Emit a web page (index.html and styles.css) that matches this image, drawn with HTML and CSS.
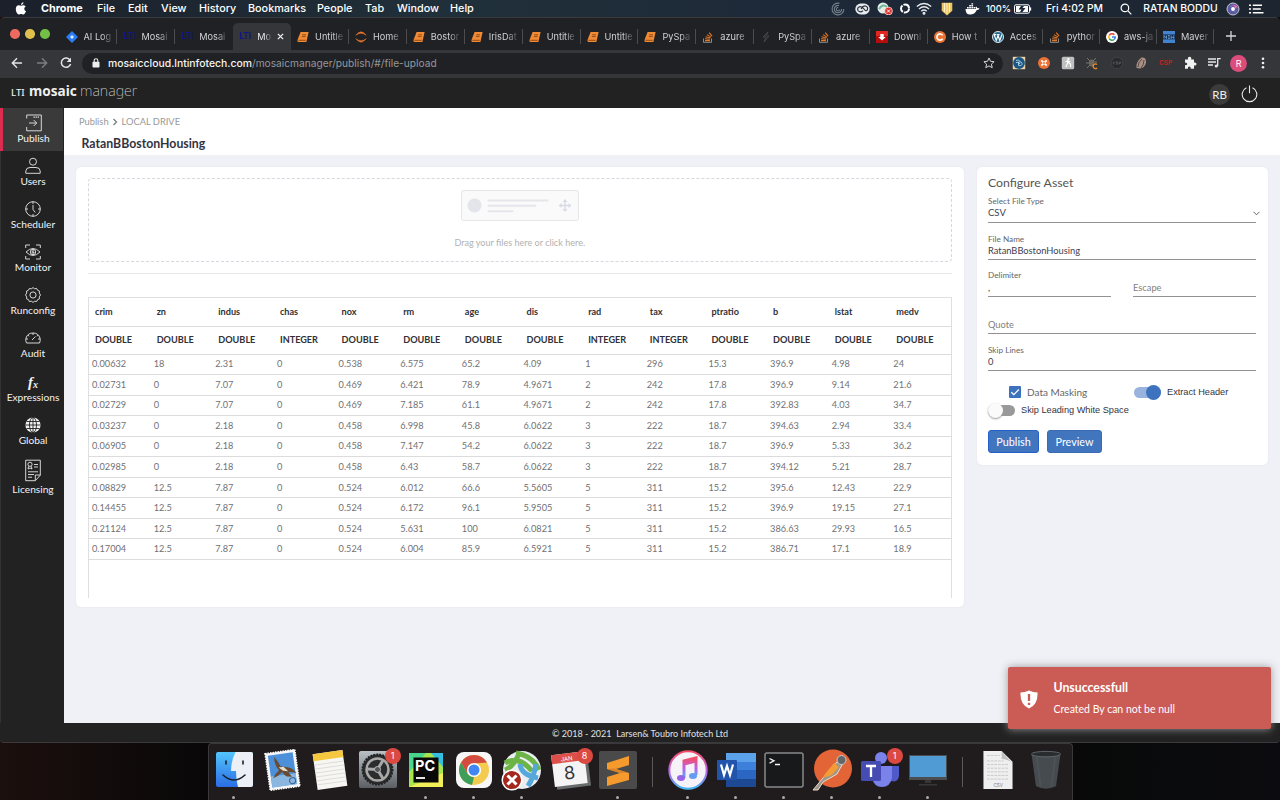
FILE: index.html
```html
<!DOCTYPE html>
<html lang="en">
<head>
<meta charset="utf-8">
<title>LTI mosaic manager</title>
<link rel="stylesheet" href="styles.css">
</head>
<body>
<svg class="defs" aria-hidden="true">
  <symbol id="book" viewBox="0 0 12 12"><path d="M3.600 1h8L9.400 11H1.200Q0 10.500.5 9z" fill="#f08a35"/><path d="M1.400 9.300h7.300M5.200 3.800h3.800M4.800 5.600h3.800" stroke="#7a3d12" stroke-width=".8" fill="none"/></symbol>
  <symbol id="stack" viewBox="0 0 12 12"><path d="M1.500 7.500v3.800h8V7.500" stroke="#8b8e92" fill="none"/><path d="M3 9.600h5M3 7.800l5 .5M3.600 5.700l4.800 1.300M5 3.600l4.100 2.500M7.200 1.600l2.900 3.600" stroke="#e87722" stroke-width="1.100"/></symbol>
</svg>

<header class="menubar">
  <nav class="menus">
    <svg width="12" height="13" viewBox="0 0 12 13"><path d="M8.500.3C7 .6 6 1.600 6.100 3 7.500 2.900 8.500 1.700 8.500.3M6 3.700C5.300 3.700 4.600 3.200 3.700 3.200 2 3.200.8 4.600.8 6.900c0 2.700 1.700 5.500 3.100 5.500.8 0 1.200-.5 2.200-.5s1.300.5 2.200.5c1.200 0 2.200-1.800 2.700-3.200C8.800 8.200 8.900 5.400 10.700 4.500 9.300 2.700 7.500 3.200 6 3.700" fill="#fff"/></svg>
    <b>Chrome</b><span>File</span><span>Edit</span><span>View</span><span>History</span><span>Bookmarks</span><span>People</span><span>Tab</span><span>Window</span><span>Help</span>
  </nav>
  <div class="status">
    <svg width="14" height="14" viewBox="0 0 14 14" fill="none" stroke="#76818c" stroke-width="1.100"><path d="M8.500 1.300A5.900 5.900 0 1 0 12.900 7M8 3.500A3.700 3.700 0 1 0 10.700 7M7.300 5.500A1.700 1.700 0 1 0 8.700 7.500"/></svg>
    <svg width="15" height="12" viewBox="0 0 15 12"><rect x=".3" y=".6" width="14.400" height="10.800" rx="5.400" fill="#e8ebee"/><path d="M8 7.800Q5 10 3 7.500 1.800 5 4.500 3.800 7 3.300 9 6t3.200 1.200Q13.500 4 10.500 3 8 2.600 6 6" fill="none" stroke="#27313d" stroke-width="1.200"/></svg>
    <svg width="16" height="13" viewBox="0 0 16 13"><circle cx="6" cy="6" r="5.500" fill="#e4ece9"/><path d="M2 7Q6 1 10 5" stroke="#6eb795" stroke-width="2" fill="none"/><circle cx="11.500" cy="9" r="3.900" fill="#d9332c" stroke="#fff" stroke-width=".7"/><path d="M10 7.500l3 3M13 7.500l-3 3" stroke="#fff"/></svg>
    <svg width="12" height="13" viewBox="0 0 12 13"><circle cx="6" cy="6.500" r="4" fill="none" stroke="#fff" stroke-width="2" stroke-dasharray="7.300 1.080"/></svg>
    <svg width="16" height="13" viewBox="0 0 16 13" fill="none" stroke="#e5e8eb" stroke-width="1.400"><path d="M.8 4.500Q8-1.500 15.200 4.500M3 7Q8 2.500 13 7M5.300 9.300Q8 6.800 10.700 9.300"/><circle cx="8" cy="11.300" r=".8" fill="#fff"/></svg>
    <svg width="12" height="14" viewBox="0 0 12 14"><path d="M.7.8h10.600v8L6 13.400.7 8.800z" fill="#ecc564"/><path d="M3.500 1v9M6 1v11M8.500 1v9" stroke="#fff2c0"/></svg>
    <svg width="15" height="12" viewBox="0 0 15 12"><path d="M.5 6H11Q10.400 4.500 11 3.500q1.300.7 1.300 1.700 1.200-.3 2.200.3-.8 1.600-2.700 1.500Q9.800 11.500 5 11.500.5 11.500.5 6M2 4h1.700v1.500H2zM4.200 4h1.700v1.500H4.200zM6.400 4h1.700v1.500H6.400zM4.200 2h1.700v1.500H4.200zM6.400 2h1.700v1.500H6.400zM6.400.2h1.700v1.300H6.400zM8.600 4h1.700v1.500H8.600z" fill="#fff"/></svg>
    <span class="percent">100%</span>
    <svg width="18" height="10" viewBox="0 0 18 10"><rect x=".5" y=".8" width="15" height="8.400" rx="1.500" fill="none" stroke="#fff" /><path d="M2 2h5L4.500 5.500h3L6 8H2zM10 2h4v6H8.500l3-4h-3z" fill="#fff"/><path d="M16.500 3.400v3.200" stroke="#fff" stroke-width="1.300"/></svg>
    <span class="clock">Fri 4:02 PM</span>
    <svg width="12" height="12" viewBox="0 0 12 12" fill="none" stroke="#fff" stroke-width="1.200"><circle cx="4.900" cy="4.900" r="3.800"/><path d="M7.700 7.700l3.600 3.600"/></svg>
    <span class="user">RATAN BODDU</span>
    <svg width="14" height="14" viewBox="0 0 14 14"><circle cx="7" cy="7" r="6" fill="#5b5aa0" stroke="#c3c5d0"/><path d="M1.500 7q4-6 5.500 0t5.500 0Q9 12.500 7 7T1.500 7" fill="#7be0ec"/><path d="M4 3.500q6-1 4.500 4.500 2-4 4-2-3-5-8.500-2.500" fill="#e56bb2"/><circle cx="7" cy="7" r="1.900" fill="#fff"/></svg>
    <svg width="15" height="10" viewBox="0 0 15 10"><path d="M0 1.200h2M3.800 1.200h9.200M0 5h2M3.800 5h8M0 8.800h2M3.800 8.800h10.700" stroke="#fff" stroke-width="1.500"/></svg>
  </div>
</header>

<div class="window">
  <div class="tabs">
    <div class="lights"><i></i><i></i><i></i></div>
    <div class="tab"><svg viewBox="0 0 12 12"><path d="M6 0l6 6-6 6-6-6z" fill="#2a7df5"/><path d="M6 4l2 2-2 2-2-2z" fill="#dbe9ff"/></svg><span>AI Log</span></div>
    <div class="tab"><b class="lti">LTI</b><span>Mosai</span></div>
    <div class="tab before"><b class="lti">LTI</b><span>Mosai</span></div>
    <div class="tab active"><b class="lti">LTI</b><span>Mo</span><svg class="close" viewBox="0 0 8 8"><path d="M1 1l6 6M7 1L1 7" stroke="#eee" stroke-width="1.500"/></svg></div>
    <div class="tab"><svg><use href="#book"/></svg><span>Untitle</span></div>
    <div class="tab"><svg viewBox="0 0 12 12"><path d="M.8 4.300Q6-2.600 11.200 4.300 6 .3.800 4.300M.8 7.700Q6 14.600 11.200 7.700 6 11.700.8 7.700" fill="#e8762c" stroke="#e8762c" stroke-width=".5"/></svg><span>Home</span></div>
    <div class="tab"><svg><use href="#book"/></svg><span>Bostor</span></div>
    <div class="tab"><svg><use href="#book"/></svg><span>IrisDat</span></div>
    <div class="tab"><svg><use href="#book"/></svg><span>Untitle</span></div>
    <div class="tab"><svg><use href="#book"/></svg><span>Untitle</span></div>
    <div class="tab"><svg><use href="#book"/></svg><span>PySpa</span></div>
    <div class="tab"><svg><use href="#stack"/></svg><span>azure</span></div>
    <div class="tab"><svg viewBox="0 0 12 12"><path d="M8 1L3 6h3l-2 5 5-6H6z" stroke="#45484b" fill="none"/></svg><span>PySpa</span></div>
    <div class="tab"><svg><use href="#stack"/></svg><span>azure</span></div>
    <div class="tab"><svg viewBox="0 0 12 12"><rect width="12" height="12" fill="#b80c0c"/><path d="M0 0h12v5H0z" fill="#e22620"/><path d="M4.300 3h3.400v3h2L6 9.500 2.300 6h2z" fill="#fff"/></svg><span>Downl</span></div>
    <div class="tab"><svg viewBox="0 0 12 12"><circle cx="6" cy="6" r="6" fill="#ec7432"/><path d="M8.600 4.300A3.100 3.100 0 1 0 8.600 7.700" stroke="#fff" stroke-width="1.600" fill="none"/></svg><span>How t</span></div>
    <div class="tab slim"><svg viewBox="0 0 12 12"><circle cx="6" cy="6" r="5.500" fill="#23668e" stroke="#dce8ef"/><path d="M2 3.500L4.300 9.500 6 4.500 7.800 9.500 9.900 3.500M1.800 3.600h2.600M5 3.600h2.600" stroke="#fff" stroke-width="1.100" fill="none"/></svg><span>Acces</span></div>
    <div class="tab slim"><svg><use href="#stack"/></svg><span>pythor</span></div>
    <div class="tab slim"><svg viewBox="0 0 12 12"><circle cx="6" cy="6" r="6" fill="#fff"/><g fill="none" stroke-width="1.600"><path d="M3.300 4.400A3.200 3.200 0 0 1 8.400 3.800" stroke="#ea4335"/><path d="M3.300 4.400a3.200 3.200 0 0 0 0 3.200" stroke="#fbbc05"/><path d="M3.300 7.600a3.200 3.200 0 0 0 4.800.9" stroke="#34a853"/><path d="M6 6h3.200Q9.200 7.600 8.100 8.500" stroke="#4285f4"/></g></svg><span>aws-ja</span></div>
    <div class="tab slim"><svg viewBox="0 0 12 12"><path d="M0 0h12v12H0z" fill="#4284cf"/><path d="M0 3.400h12v5H0z" fill="#17335a"/><path d="M1 7.500v-3l2.500 3v-3M5 4.500h1.800M5 6h1.800M5 7.500h1.800M8.200 4.500v3l1.200-1.500 1.300 1.500v-3" stroke="#7fb3ea" stroke-width=".7" fill="none"/></svg><span>Maver</span></div>
    <svg class="plus" viewBox="0 0 10 10"><path d="M5 0v10M0 5h10" stroke="#d5d6d8" stroke-width="1.300"/></svg>
  </div>

  <div class="toolbar">
    <div class="navbtns">
      <svg width="12" height="12" viewBox="0 0 12 12" fill="none" stroke="#e4e5e7" stroke-width="1.400"><path d="M11 6H1.500M6 1.300L1.300 6 6 10.700"/></svg>
      <svg width="12" height="12" viewBox="0 0 12 12" fill="none" stroke="#7c7d81" stroke-width="1.400"><path d="M1 6h9.500M6 1.300L10.700 6 6 10.700"/></svg>
      <svg width="12" height="12" viewBox="0 0 12 12" fill="none" stroke="#e4e5e7" stroke-width="1.500"><path d="M10 3A4.700 4.700 0 1 0 10.600 7"/><path d="M11 .7V5H6.700z" fill="#e4e5e7" stroke="none"/></svg>
    </div>
    <div class="address">
      <svg width="8" height="10" viewBox="0 0 8 10"><rect x=".5" y="3.800" width="7" height="5.700" rx=".8" fill="#eee"/><path d="M2.200 4V2.500a1.800 1.800 0 0 1 3.600 0V4" stroke="#eee" fill="none" stroke-width="1.100"/></svg>
      <p><b>mosaiccloud.lntinfotech.com</b>/mosaicmanager/publish/#/file-upload</p>
      <svg width="12" height="12" viewBox="0 0 12 12"><path d="M6 1l1.500 3.300 3.600.4-2.700 2.400.8 3.600L6 8.900l-3.200 1.800.8-3.600L.9 4.700l3.600-.4z" fill="none" stroke="#d6d7d9"/></svg>
    </div>
    <div class="extensions">
      <svg viewBox="0 0 14 14"><rect x=".8" y=".8" width="12.400" height="12.400" fill="#e9d5a9"/><circle cx="7" cy="7" r="5.900" fill="#1c5685"/><path d="M4 4.500q3-1.500 4 1M4 6.500q3-1 4 1.500M6.500 6q3-1 3.500 1.500T6.500 9.500z" fill="none" stroke="#b4d8ea" stroke-width=".9"/></svg>
      <svg viewBox="0 0 14 14"><circle cx="7" cy="7" r="6" fill="#ed7134"/><path d="M4.300 4.300l5.400 5.400M9.700 4.300l-5.400 5.400" stroke="#fff" stroke-width="1.700"/><circle cx="7" cy="7" r="1" fill="#ed7134"/></svg>
      <svg viewBox="0 0 14 14"><rect x=".8" y=".8" width="12.400" height="12.400" rx="1.500" fill="#bfbfbf"/><path d="M7 3v3l-2 5M7 6l2.500 2v3M4.500 5.500H9" stroke="#fff" fill="none" stroke-width="1.200"/><circle cx="7.500" cy="3" r="1" fill="#fff"/></svg>
      <svg viewBox="0 0 14 14"><ellipse cx="6.500" cy="7" rx="2.500" ry="3.500" fill="#6e675d"/><path d="M2 2l3 3M11 2L8 5M1 7h4M12 6H8M2 12l3-3" stroke="#7b746a"/><path d="M12 8.500a2.300 2.300 0 1 0 0 3.500" stroke="#ef9424" stroke-width="1.300" fill="none"/></svg>
      <svg viewBox="0 0 14 14"><circle cx="7" cy="7" r="5.700" fill="#27292b" stroke="#3f4144"/><path d="M4.500 6H3.300v2h1.200M6 8.200h1.800V7H6V5.800h1.800M9.300 8.500V6h1.500v1.200H9.300" stroke="#5c5f63" fill="none" stroke-width=".8"/></svg>
      <svg viewBox="0 0 14 14"><path d="M2.500 12Q1.500 6 7.500 1.500 12.500 1 12 6.500 11 12 6 12.500z" fill="#a98f85"/><path d="M4 11q0-5 4-8M7 12q3-3 3-8" stroke="#594841" fill="none"/></svg>
      <span class="csp">CSP</span>
      <svg viewBox="0 0 14 14"><path d="M2 3.500h3q-.5-2.700 1.600-2.700T8.200 3.500H11v3q2.500-.5 2.500 1.500T11 9.500v3.300H7.800q0-2.300-1.500-2.300T4.800 12.800H2V9.300q2.300-.1 2.300-1.400T2 6.500z" fill="#f1f1f2"/></svg>
      <svg viewBox="0 0 14 14" fill="none" stroke="#e8e8ea" stroke-width="1.300"><path d="M1 3h8M1 6h8M1 9h5M10.700 10V2.700h3"/><circle cx="9.300" cy="10" r="1.600" fill="#e8e8ea" stroke="none"/></svg>
      <span class="profile">R</span>
      <svg viewBox="0 0 14 14" fill="#f1f1f2"><circle cx="7" cy="2.800" r="1.300"/><circle cx="7" cy="7" r="1.300"/><circle cx="7" cy="11.200" r="1.300"/></svg>
    </div>
  </div>

  <div class="apphead">
    <h1><small>LTI</small><b>mosaic</b><span>manager</span></h1>
    <div class="account">
      <span class="avatar">RB</span>
      <svg width="17" height="18" viewBox="0 0 17 18" fill="none" stroke="#e8e8e8" stroke-width="1.100"><path d="M5.500 2.700a7.300 7.300 0 1 0 6 0M8.500.5v7.800"/></svg>
    </div>
  </div>

  <div class="app">
    <aside class="side">
      <a class="on"><svg viewBox="0 0 16 18"><path d="M.7 4.500V1h14.600v15.800H.7V13M3 9h7.500M7.700 6l3 3-3 3"/><path d="M7.500 3.200h6" stroke-dasharray="1.300 .8" stroke-width="1.300"/></svg>Publish</a>
      <a><svg viewBox="0 0 16 18"><circle cx="8" cy="4.700" r="3.500"/><path d="M.8 16.300V14Q1 10.500 5 10.500h6q4 0 4.200 3.500v2.300z"/></svg>Users</a>
      <a><svg viewBox="0 0 16 18"><circle cx="8" cy="9" r="7.300"/><path d="M8 1.500V4M8 14v2.500M.6 9H3M13 9h2.400M8 5v4.500l2.300 3"/></svg>Scheduler</a>
      <a><svg viewBox="0 0 16 18"><path d="M.7 5V2H5M11 2h4.300v3M15.300 13v3H11M5 16H.7v-3M1 9q7-7 14 0-7 7-14 0"/><circle cx="8" cy="9" r="2.700"/><path d="M9 8q-2-1-2 1t2 1V9H8"/></svg>Monitor</a>
      <a><svg viewBox="0 0 16 18"><circle cx="8" cy="9" r="3.100"/><path d="M8 1.600l1.600 1.200 2-.4.900 1.800 1.900.8-.1 2L15.500 9l-1.200 1.900.1 2-1.900.8-.9 1.900-2-.4L8 16.400l-1.600-1.200-2 .4-.9-1.900-1.900-.8.100-2L.5 9l1.200-2-.1-2 1.900-.8.900-1.800 2 .4z" stroke-linejoin="round"/></svg>Runconfig</a>
      <a><svg viewBox="0 0 16 18"><path d="M1.500 14Q.2 11.500 1 9 2.600 4 8 4t7 5q.8 2.500-.5 5zM8 4v2M3 6l1 1.300M13 6l-1 1.300M1 10h2M13 10h2M7 11l3.500-3.500"/></svg>Audit</a>
      <a><i class="fx">f<sub>x</sub></i>Expressions</a>
      <a><svg viewBox="0 0 16 18"><circle cx="8" cy="9" r="7.600" fill="#f2f2f2" stroke="none"/><g stroke="#222"><ellipse cx="8" cy="9" rx="3.500" ry="7.600"/><path d="M8 1.400v15.200M.4 9h15.200M1.500 5.500h13M1.500 12.500h13"/></g></svg>Global</a>
      <a class="tall"><svg viewBox="0 0 16 22"><path d="M.7.7h14.600v15l-5 5.500H.7zM15.300 15.500h-5v5.500M9 5h4M9 7.500h4M3 12.300h10M3 15h6M3 17.700h4"/><circle cx="5" cy="4.800" r="2.100"/><path d="M3.700 6.800L3 9.500l2-1 2 1-.7-2.700"/></svg>Licensing</a>
    </aside>

    <main>
      <div class="pagehead">
        <p>Publish <svg width="6" height="8" viewBox="0 0 6 8"><path d="M1.500 1l3 3-3 3" stroke="#777" fill="none" stroke-width="1.200"/></svg> LOCAL DRIVE</p>
        <h2>RatanBBostonHousing</h2>
      </div>
      <div class="panels">
        <section class="card data">
          <div class="drop">
            <svg width="118" height="31" viewBox="0 0 118 31"><rect x=".5" y=".5" width="117" height="30" rx="2" fill="#fafafb" stroke="#e5e5ea"/><circle cx="13.500" cy="15.500" r="7" fill="#e4e5eb"/><path d="M27.500 10.500h59M27.500 15.800h47M27.500 21.200h24" stroke="#e5e5eb" stroke-width="2" stroke-linecap="round"/><path d="M104 10.500v10M99 15.500h10" stroke="#d9dae6" stroke-width="1.400"/><path d="M104 9l2.500 3h-5zM104 22l2.500-3h-5zM97.500 15.500l3-2.500v5zM110.500 15.500l-3-2.500v5z" fill="#d9dae6"/></svg>
            <p>Drag your files here or click here.</p>
          </div>
          <hr>
          <div class="tablebox">
            <table>
              <thead>
                <tr><th>crim<th>zn<th>indus<th>chas<th>nox<th>rm<th>age<th>dis<th>rad<th>tax<th>ptratio<th>b<th>lstat<th>medv
                <tr><th>DOUBLE<th>DOUBLE<th>DOUBLE<th>INTEGER<th>DOUBLE<th>DOUBLE<th>DOUBLE<th>DOUBLE<th>INTEGER<th>INTEGER<th>DOUBLE<th>DOUBLE<th>DOUBLE<th>DOUBLE
              <tbody>
                <tr><td>0.00632<td>18<td>2.31<td>0<td>0.538<td>6.575<td>65.2<td>4.09<td>1<td>296<td>15.3<td>396.9<td>4.98<td>24
                <tr><td>0.02731<td>0<td>7.07<td>0<td>0.469<td>6.421<td>78.9<td>4.9671<td>2<td>242<td>17.8<td>396.9<td>9.14<td>21.6
                <tr><td>0.02729<td>0<td>7.07<td>0<td>0.469<td>7.185<td>61.1<td>4.9671<td>2<td>242<td>17.8<td>392.83<td>4.03<td>34.7
                <tr><td>0.03237<td>0<td>2.18<td>0<td>0.458<td>6.998<td>45.8<td>6.0622<td>3<td>222<td>18.7<td>394.63<td>2.94<td>33.4
                <tr><td>0.06905<td>0<td>2.18<td>0<td>0.458<td>7.147<td>54.2<td>6.0622<td>3<td>222<td>18.7<td>396.9<td>5.33<td>36.2
                <tr><td>0.02985<td>0<td>2.18<td>0<td>0.458<td>6.43<td>58.7<td>6.0622<td>3<td>222<td>18.7<td>394.12<td>5.21<td>28.7
                <tr><td>0.08829<td>12.5<td>7.87<td>0<td>0.524<td>6.012<td>66.6<td>5.5605<td>5<td>311<td>15.2<td>395.6<td>12.43<td>22.9
                <tr><td>0.14455<td>12.5<td>7.87<td>0<td>0.524<td>6.172<td>96.1<td>5.9505<td>5<td>311<td>15.2<td>396.9<td>19.15<td>27.1
                <tr><td>0.21124<td>12.5<td>7.87<td>0<td>0.524<td>5.631<td>100<td>6.0821<td>5<td>311<td>15.2<td>386.63<td>29.93<td>16.5
                <tr><td>0.17004<td>12.5<td>7.87<td>0<td>0.524<td>6.004<td>85.9<td>6.5921<td>5<td>311<td>15.2<td>386.71<td>17.1<td>18.9
            </table>
          </div>
        </section>

        <section class="card config">
          <h3>Configure Asset</h3>
          <div class="field type"><label>Select File Type</label><span>CSV</span><svg class="chev" width="7" height="5" viewBox="0 0 7 5"><path d="M.5.800l3 3 3-3" stroke="#666" fill="none"/></svg></div>
          <div class="field name"><label>File Name</label><span>RatanBBostonHousing</span></div>
          <div class="pair">
            <div class="field delim"><label>Delimiter</label><span>,</span></div>
            <div class="field hint"><span>Escape</span></div>
          </div>
          <div class="field hint quote"><span>Quote</span></div>
          <div class="field skip"><label>Skip Lines</label><span>0</span></div>
          <div class="switches">
            <div class="check"><svg width="12" height="12" viewBox="0 0 12 12"><rect width="12" height="12" rx="1" fill="#3d73be"/><path d="M2.300 6.300l2.500 2.400 5-5.200" stroke="#fff" fill="none" stroke-width="1.300"/></svg>Data Masking</div>
            <div class="toggle lit"><i></i>Extract Header</div>
            <div class="toggle"><i></i>Skip Leading White Space</div>
          </div>
          <div class="buttons"><button class="focus">Publish</button><button>Preview</button></div>
        </section>
      </div>
    </main>
  </div>
  <footer>© 2018 - 2021&nbsp; Larsen&amp; Toubro Infotech Ltd</footer>

  <div class="toast">
    <svg width="18" height="19" viewBox="0 0 18 19"><path d="M9 .5Q13 2.500 17.500 2.500 18.200 14.500 9 18.500-.2 14.500.5 2.500 5 2.500 9 .5" fill="#fff"/><path d="M9 4v7M9 12.800v2.300" stroke="#cb5b55" stroke-width="2.300"/></svg>
    <div><b>Unsuccessfull</b><p>Created By can not be null</p></div>
  </div>
</div>

<div class="dock">
  <div class="slot run"><svg viewBox="0 0 40 40"><defs><linearGradient id="fb" x2="0" y2="1"><stop stop-color="#53c5fb"/><stop offset="1" stop-color="#2a6de6"/></linearGradient></defs><rect x="2" y="2" width="37" height="35" rx="2" fill="url(#fb)"/><path d="M21.500 2Q17 11 17 21h5q0 9 2 16h13q2 0 2-2V4q0-2-2-2z" fill="#eceff6"/><path d="M12 11v3M29 11v3M9 25q11 10 22 0" stroke="#16222e" stroke-width="1.600" fill="none" stroke-linecap="round"/></svg></div>
  <div class="slot"><svg viewBox="0 0 40 40"><g transform="rotate(-8 20 20)"><rect x="5.500" y="1.500" width="30" height="37" fill="#f4f5f6" stroke="#fff" stroke-width="1.500" stroke-dasharray="1.500 1"/><path d="M8 4h25v32H8z" fill="#4d90da"/><path d="M8 25h25v11H8z" fill="#8ab6df"/><path d="M14 6q3 4 5 10l3 1q8 1 12 8-4-2-8-2l3 5-5-1q-3-2-4-5-5 4-10 5 2-4 7-7-4-6-3-14" fill="#684b31"/><path d="M17 17l5 0 4 5-5-1z" fill="#e5ddcb"/><circle cx="29" cy="32" r="3" fill="none" stroke="#336294"/></g></svg></div>
  <div class="slot"><svg viewBox="0 0 40 40"><g transform="rotate(-8 20 20)"><path d="M5 2h30v36H5z" fill="#f7f6f2"/><path d="M5 2h30v7H5z" fill="#f6c83d"/><path d="M5 13h30M5 17h30M5 21h30M5 25h30M5 29h30M5 33h30" stroke="#d4d4d2" stroke-width=".7"/></g></svg></div>
  <div class="slot"><svg viewBox="0 0 40 40"><defs><linearGradient id="pg" x2="0" y2="1"><stop stop-color="#b9c1c7"/><stop offset="1" stop-color="#5b5f64"/></linearGradient></defs><rect x="1" y="1" width="38" height="37" rx="2" fill="url(#pg)"/><circle cx="19.500" cy="19.500" r="15" fill="#2b2c2e" stroke="#202123" stroke-width="2" stroke-dasharray="2 1"/><circle cx="19.500" cy="19.500" r="11" fill="none" stroke="#aaa9a7" stroke-width="2.500"/><path d="M19.500 19.500L9 19M19.500 19.500l6-10M19.500 19.500l6 10" stroke="#aaa9a7" stroke-width="3"/><circle cx="19.500" cy="19.500" r="3" fill="#55585a" stroke="#bbb"/></svg><em>1</em></div>
  <div class="slot run"><svg viewBox="0 0 40 40"><path d="M3 3h34v34H3z" fill="#a7e44d"/><path d="M25 3h12v14z" fill="#33bfe2"/><path d="M3 37l34-14v14z" fill="#f3ef58"/><path d="M3 3h17L3 22z" fill="#47d68b"/><rect x="7.500" y="7.500" width="25" height="25" fill="#080808"/><path d="M10 28h9" stroke="#fff" stroke-width="1.800"/><text x="9" y="21" class="pc">PC</text></svg></div>
  <div class="slot run"><svg viewBox="0 0 40 40"><rect x="2" y="2" width="36" height="36" rx="8" fill="#f7f7f7"/><circle cx="20" cy="20" r="15" fill="#f3cb4f"/><path d="M7 12.500a15 15 0 0 1 26 0L20 13.500l-6.500 10z" fill="#d34c3f"/><path d="M7 12.500l6.500 11Q16 27 20 27l-2 7.900A15 15 0 0 1 7 12.500" fill="#3e9d58"/><circle cx="20" cy="20" r="7.100" fill="#fff"/><circle cx="20" cy="20" r="5.500" fill="#4285f4"/></svg></div>
  <div class="slot run"><svg viewBox="0 0 40 40"><circle cx="20" cy="20" r="19" fill="#e9eef0"/><path d="M3 20Q11 17 17 4M14 3q17 3 23 17M3 13q14-8 27 8" stroke="#6db446" stroke-width="5" fill="none"/><path d="M18 14q1 11 18 14M34 14q-2 13-8 22" stroke="#56a8dc" stroke-width="5" fill="none"/><circle cx="10" cy="30" r="9.800" fill="#a5281e" stroke="#fff" stroke-width="1.500"/><path d="M5.500 25.500l9 9M14.500 25.500l-9 9" stroke="#fff" stroke-width="3"/></svg></div>
  <div class="slot"><svg viewBox="0 0 40 40"><g transform="rotate(-7 20 20)"><path d="M5 6h34v32H5z" fill="#676b6b"/><path d="M3 3h33v32H3z" fill="#f4f4f4"/><path d="M3 3h33v9H3z" fill="#dd5049"/><text x="12" y="10.500" class="month">JAN</text><text x="13.500" y="29" class="day">8</text></g></svg><em>8</em></div>
  <div class="slot run"><svg viewBox="0 0 40 40"><rect x="1" y="1" width="38" height="38" rx="2" fill="#4a4a4b"/><path d="M9 13l22-7v9l-13 4 13 4v7L9 36v-9l13-4-13-4z" fill="#f69a2d"/><path d="M9 19l13 4 7-.6L16 18.500z" fill="#d9832a"/></svg></div>
  <div class="divider"></div>
  <div class="slot run"><svg viewBox="0 0 40 40"><defs><linearGradient id="mu" x2="0" y2="1"><stop stop-color="#f64c66"/><stop offset=".55" stop-color="#b764ee"/><stop offset="1" stop-color="#48b8f4"/></linearGradient></defs><circle cx="20" cy="20" r="18.700" fill="#f5f3f8" stroke="url(#mu)" stroke-width="2"/><path d="M16 28V11l12-3v17M16 14l12-3" stroke="url(#mu)" stroke-width="3" fill="none"/><ellipse cx="13" cy="28" rx="4" ry="3" fill="#9863e9"/><ellipse cx="25" cy="26" rx="4" ry="3" fill="#659cf1"/></svg></div>
  <div class="slot run"><svg viewBox="0 0 40 40"><path d="M10 3h30v34H10z" fill="#2b66c2"/><path d="M10 3h30v9H10z" fill="#5aa3ea"/><path d="M10 12h30v8H10z" fill="#3c80db"/><path d="M10 29h30v8H10z" fill="#1c4894"/><rect x="1" y="10" width="20" height="20" rx="1" fill="#2354ac"/><path d="M5 14.500L8 25l3-9 3 9 3-10.500" stroke="#fff" stroke-width="2.200" fill="none"/></svg></div>
  <div class="slot run"><svg viewBox="0 0 40 40"><rect x="1" y="3" width="38" height="34" rx="2" fill="#17191b" stroke="#85898b" stroke-width="1.500"/><path d="M5.500 8.500l4.500 2.300-4.500 2.300M11 14.500h5" stroke="#f5f5f5" fill="none" stroke-width="1.300"/></svg></div>
  <div class="slot run"><svg viewBox="0 0 40 40"><circle cx="21" cy="18.500" r="19" fill="#e36437"/><path d="M1 40L16 22l9-10 5 3-5 9-14 8-5 8z" fill="#999790" stroke="#f0d9c6"/><path d="M13 24l9-11 5 4-7 8-9 3z" fill="#f19c37"/><circle cx="29.500" cy="10" r="4.500" fill="#646768" stroke="#ccc"/></svg></div>
  <div class="slot run"><svg viewBox="0 0 40 40"><circle cx="21" cy="8" r="6" fill="#7b83eb"/><path d="M29 16h10v10q-1 7-8 5z" fill="#5059c9"/><path d="M12 16h20v12q-2 9-10 9t-10-9z" fill="#7b83eb"/><rect x="1" y="11" width="20" height="20" rx="1.500" fill="#454db2"/><path d="M6 16h10M11 16v11" stroke="#fff" stroke-width="2.300"/></svg><em>1</em></div>
  <div class="slot run"><svg viewBox="0 0 40 40"><rect x="1" y="5" width="38" height="25" fill="#4b4d4f"/><path d="M2 6h36v21H2z" fill="#519bd5"/><path d="M17 30h6v3h-6zM11 34h18v1.500H11z" fill="#353739"/></svg></div>
  <div class="divider"></div>
  <div class="slot"><svg viewBox="0 -1 40 44"><path d="M4 0h20l12 12v30H4z" fill="#efefef"/><path d="M24 0v9q7 0 12 5z" fill="#bfc0c1"/><path d="M8 5h14M8 11h18M8 15h24M8 19h24M8 23h24M8 27h24M8 31h24" stroke="#c7c7c7" stroke-dasharray="3 1"/><text x="15" y="40" class="csv">CSV</text></svg></div>
  <div class="slot"><svg viewBox="0 -1 40 44"><path d="M4 3l5 36q11 5 22 0l5-36z" fill="#454b4e"/><path d="M10 7l4 32M30 7l-4 32" stroke="#4d5458" stroke-width="2"/><ellipse cx="20" cy="3.500" rx="16" ry="3" fill="#282c2e" stroke="#626a6d"/></svg></div>
</div>
</body>
</html>
```

FILE: styles.css
```css
* { box-sizing: border-box; }
body, h1, h2, h3, p { margin: 0; }
body {
  width: 1280px; height: 800px; overflow: hidden;
  font-family: Lato, sans-serif; color: #555;
  background: linear-gradient(90deg, #1c0f0d, #090809 16%, #080908 84%, #0c0c10);
}
svg { display: block; }
.defs { position: absolute; width: 0; height: 0; }

/* system menu bar */
.menubar {
  height: 17px; display: flex; justify-content: space-between;
  background: linear-gradient(90deg, #1b202a, #20303a 35%, #1d2838 65%, #1d2530);
  font: 500 10.800px/17px Inter, sans-serif; color: #fff;
}
.menus {
  display: grid; align-items: center; padding-left: 15px;
  grid-template-columns: 26px 56px 31px 33px 38px 49px 69px 48px 32px 53px 30px;
}
.status {
  display: grid; align-items: center; justify-items: center; padding-right: 9px; white-space: nowrap;
  grid-template-columns: 24px 24px 22px 18px 20px 26px 24px 29px 20px 83px 20px 89px 16px 30px;
}
.status .percent { font-size: 9.300px; }
.status .clock { font-size: 10.300px; }
.status .user { font-size: 10.400px; }

/* browser window */
.window { position: relative; height: 726px; background: #222; border: solid #3a3a3c; border-width: 1px 0 1px; border-radius: 5px 5px 4px 4px; }
.tabs { height: 32px; display: flex; background: #202124; border-radius: 5px 5px 0 0; }
.lights { width: 59.500px; padding: 11px 0 0 10px; display: flex; gap: 5.500px; }
.lights i { width: 9.500px; height: 9.500px; border-radius: 50%; background: #ed6a5e; }
.lights i:nth-child(2) { background: #e0c04c; }
.lights i:nth-child(3) { background: #72be47; }
.tab {
  width: 57.900px; height: 15px; margin-top: 11px; padding: 0 0 0 6px; flex: none;
  display: flex; align-items: center; gap: 6px; border-right: 1px solid #4b4c50;
  font: 400 9.200px/15px Inter, sans-serif; color: #d0d1d4;
}
.tab.slim { width: 57.100px; }
.tab svg { width: 12px; height: 12px; flex: none; }
.tab span {
  width: 31px; white-space: nowrap;
  -webkit-mask-image: linear-gradient(90deg, #000 58%, rgba(0, 0, 0, .3) 85%);
  mask-image: linear-gradient(90deg, #000 58%, rgba(0, 0, 0, .3) 85%);
}
.tab .lti { width: 12px; flex: none; font-size: 8.500px; letter-spacing: -.2px; color: #10158c; }
.tab.before { border-color: transparent; }
.tab.active { height: 27px; margin-top: 5px; padding-bottom: 1px; background: #35363a; border: 0; border-radius: 5px 5px 0 0; }
.tab.active span { width: 14px; color: #e5e5e7; }
.tab.active .close { width: 7px; height: 7px; }
.plus { width: 10px; height: 10px; margin: 13px 0 0 12px; }

.toolbar { height: 28px; display: flex; align-items: center; background: #35363a; }
.navbtns { width: 82px; padding-left: 11px; display: flex; gap: 12.500px; }
.address {
  width: 921px; height: 21px; margin-top: -2px; padding: 0 8px 0 10px; display: flex; align-items: center; gap: 8px;
  border-radius: 11px; background: #202124; font: 10.200px Inter, sans-serif; color: #96989b;
}
.address p { flex: 1; }
.address b { font-weight: 500; font-size: 10.400px; color: #f4f4f5; }
.navbtns, .extensions { margin-top: -2px; }
.extensions { flex: 1; padding-left: 4px; display: grid; grid-template-columns: repeat(11, 24.400px); align-items: center; justify-items: center; }
.extensions svg { width: 14px; height: 14px; }
.csp { font: 700 6.500px Inter, sans-serif; color: #bd2420; }
.profile { width: 17px; height: 17px; border-radius: 50%; background: #dc4d7c; color: #fff; font: 9px/17px Inter, sans-serif; text-align: center; }

/* application */
.apphead { height: 30px; padding: 3px 22px 0 11px; display: flex; justify-content: space-between; background: #222; color: #eee; }
h1 { display: flex; align-items: baseline; font: 300 13.600px/20px "Noto Sans", sans-serif; }
h1 small { width: 18px; font-size: 9.500px; font-weight: 500; }
h1 b { width: 51px; font-weight: 700; }
h1 span { color: #ccc; font-weight: 200; font-size: 14.300px; }
.account { display: flex; align-items: center; gap: 11px; margin-top: -1px; }
.avatar { width: 21px; height: 21px; border-radius: 50%; background: #3b3b3b; font-size: 11.500px; line-height: 22px; text-align: center; }
.app { height: 615px; display: flex; background: #f0f1f6; }
.side { width: 64px; flex: none; background: #222; border-left: 1px solid #333; }
.side a { height: 43.100px; padding: 6px 0 0 1px; display: flex; flex-direction: column; align-items: center; font-size: 10.200px; line-height: 13px; color: #f2f2f2; }
.side a svg { width: 16px; height: 18px; fill: none; stroke: #e9e9e9; stroke-width: .9; }
.side a.on { width: 63px; margin-left: -1px; background: #3a3a3a; border-left: 3px solid #dc2c50; padding-right: 0; }
.side a.tall svg { height: 23px; }
.side a.tall { padding-top: 6px; gap: 1px; }
.fx { height: 18px; font: italic 700 15px/18px "Liberation Serif", serif; }
.fx sub { font-size: 10px; line-height: 0; vertical-align: -1px; }
main { flex: 1; }
.pagehead { height: 47px; padding: 6px 15px; background: #fff; }
.pagehead p { display: flex; align-items: center; gap: 3.500px; font-size: 9.300px; line-height: 15px; color: #999; }
.pagehead h2 { margin: 7px 0 0 2.500px; font-size: 12.300px; line-height: 15px; color: #333340; }
.panels { padding: 12px 12px 0; display: flex; align-items: flex-start; justify-content: space-between; }
.card { background: #fff; border-radius: 5px; box-shadow: 0 0 2px #dfe0e6; }
.data { width: 888px; height: 440px; padding: 11px 12px 0 11.500px; }
.drop { height: 84px; padding-top: 11px; display: flex; flex-direction: column; align-items: center; border: 1px dashed #d7d7df; border-radius: 4px; }
.drop p { margin-top: 16px; font-size: 9.100px; line-height: 12px; color: #b2b2b2; }
hr { height: 1px; margin: 11px 0 23px; border: 0; background: #e7e7e9; }
.tablebox { height: 301px; border: solid #dedfe3; border-width: 1px 1px 0; }
table { width: 863px; border-collapse: collapse; table-layout: fixed; }
th, td { text-align: left; white-space: nowrap; border-bottom: 1px solid #dcdcde; }
th { height: 28px; padding: 0 0 1px 6.500px; font-size: 9.150px; color: #303036; }
td { height: 20.550px; padding: 0 0 1px 3.500px; font-size: 9.200px; color: #717175; }

.config { width: 291px; height: 298px; padding: 6.500px 12px 0 11px; }
h3 { font-size: 12.300px; font-weight: 400; line-height: 17px; color: #555; }
.field { position: relative; display: flex; flex-direction: column; justify-content: flex-end; padding-bottom: 2px; border-bottom: 1px solid #929296; font-size: 9.300px; line-height: 12px; color: #41414d; }
.field label { font-size: 8.200px; line-height: 12px; color: #666; }
.type { height: 32.500px; padding-bottom: 3px; font-size: 9.500px; }
.name { height: 37px; }
.chev { position: absolute; right: -4px; bottom: 6px; }
.pair { height: 37px; display: flex; justify-content: space-between; }
.pair .field { width: 123px; }
.delim label { margin-bottom: 1px; }
.hint { color: #808080; }
.quote { height: 37px; }
.skip { height: 37px; }
.switches { margin-top: 12px; display: grid; grid-template: 18px 18px / 146px 1fr; align-items: center; }
.check { display: flex; gap: 6px; align-items: center; padding-left: 21px; font-size: 10px; color: #666; }
.toggle { display: flex; gap: 6px; align-items: center; white-space: nowrap; font: 9.200px "Liberation Sans", sans-serif; color: #333340; }
.toggle i { width: 27px; height: 11px; border-radius: 6px; background: #999; display: flex; align-items: center; }
.toggle i::before { content: ""; width: 15px; height: 15px; flex: none; border-radius: 50%; background: #fafafa; box-shadow: 0 1px 2px #999; }
.toggle.lit i { background: #98b4de; justify-content: flex-end; }
.toggle.lit i::before { background: #3d73be; box-shadow: none; }
.buttons { margin-top: 11px; display: flex; gap: 8px; }
button { width: 55px; height: 23px; padding: 0; border: 1px solid #3a6cb3; border-radius: 3px; background: #4176bf; color: #fff; font: 10.800px Lato, sans-serif; }
button.focus { width: 51px; border-color: #2360c8; }
footer { height: 19px; font-size: 9px; line-height: 22px; text-align: center; color: #e1e1e1; }
.toast {
  position: absolute; left: 1008px; top: 649px; width: 263px; height: 62px; padding: 2px 12px 0 11.500px;
  display: flex; align-items: center; gap: 16px; border-radius: 2px;
  background: #cb5b55; color: #fff; box-shadow: 0 0 8px #999;
}
.toast b { display: block; margin-top: -3px; font-size: 12.300px; line-height: 17px; }
.toast p { margin-top: 6px; font-size: 10.500px; line-height: 15px; }

/* dock */
.dock { width: 865px; height: 57px; margin: 0 auto; padding: 0 1px; display: flex; background: #201c1e; border: 1px solid #39393b; border-bottom: 0; border-radius: 4px 4px 0 0; }
.slot { position: relative; width: 48px; padding: 6px 4px 0; flex: none; }
.slot > svg { width: 40px; height: 40px; overflow: visible; }
.slot.run::after { content: ""; display: block; width: 3px; height: 3px; margin: 6px auto 0; border-radius: 50%; background: #aaa; }
.slot em { position: absolute; left: 31px; top: 4px; width: 16px; height: 16px; border-radius: 50%; background: #dc4940; color: #fff; font: 9px/16px Inter, sans-serif; text-align: center; }
.divider { width: 1px; height: 30px; margin: 13px 10.500px 0; background: #5b585b; flex: none; }
.pc { font: 700 14.500px Inter, sans-serif; fill: #fff; }
.month { font: 6px Inter, sans-serif; fill: #fff; }
.day { font: 18px Inter, sans-serif; fill: #333; }
.csv { font: 5px Inter, sans-serif; fill: #777; }
```
